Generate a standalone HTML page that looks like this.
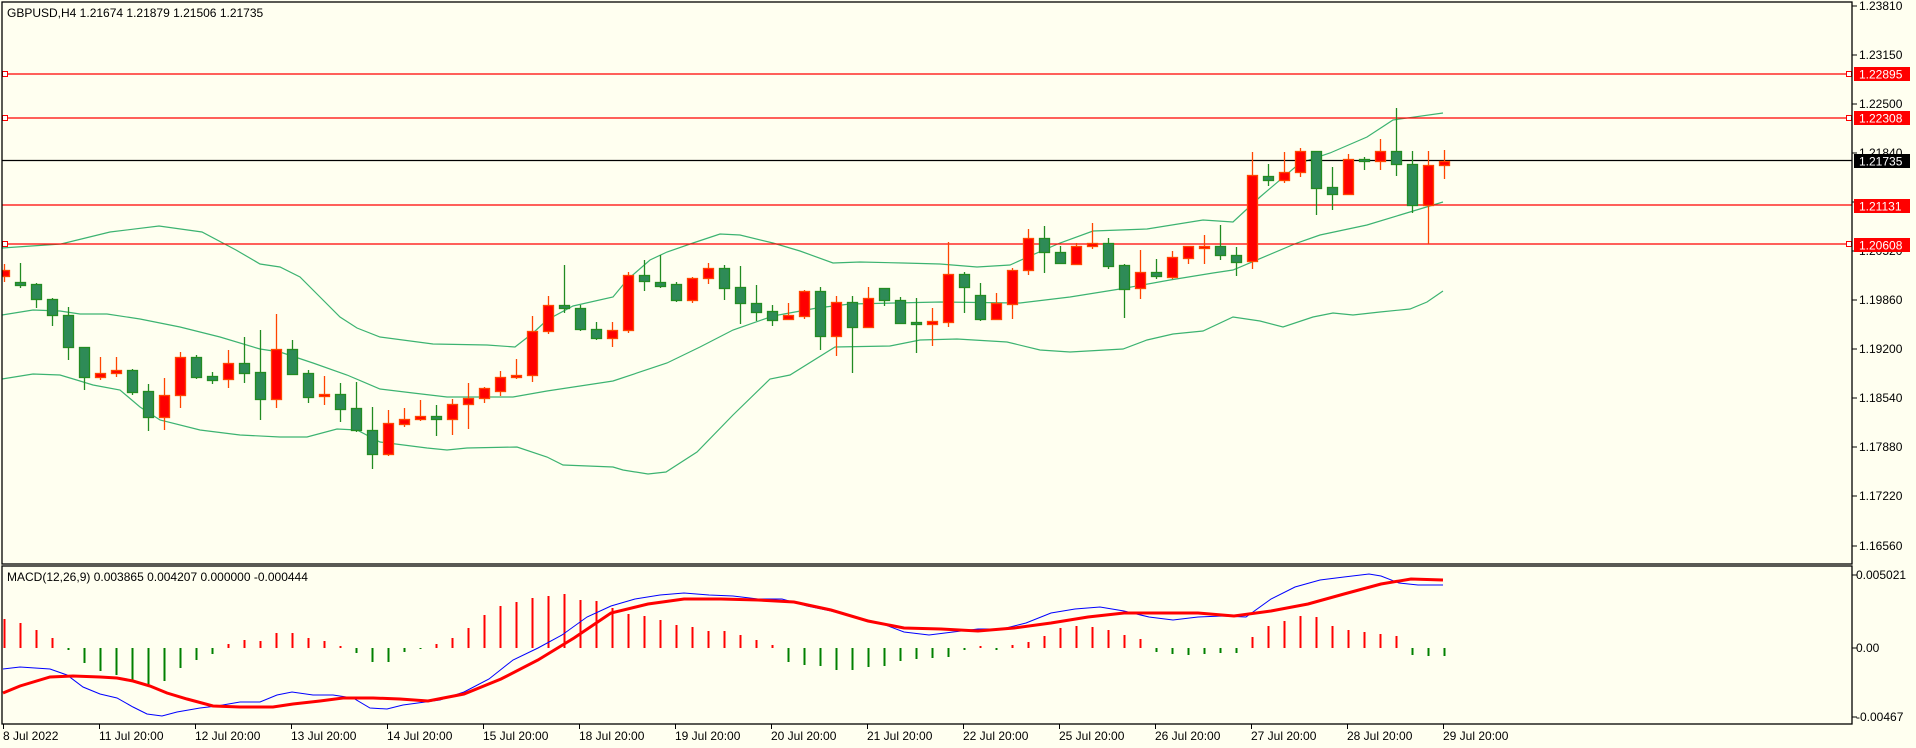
<!DOCTYPE html>
<html><head><meta charset="utf-8"><style>
html,body{margin:0;padding:0;background:#FFFFF0;width:1916px;height:748px;overflow:hidden}
svg{display:block}
text{font-family:"Liberation Sans",Tahoma,sans-serif;font-size:12px;fill:#000}
</style></head><body>
<svg id="s" width="1916" height="748" viewBox="0 0 1916 748" xmlns="http://www.w3.org/2000/svg">
<rect width="1916" height="748" fill="#FFFFF0"/>
<g id="bands" fill="none" stroke="#3CB371" stroke-width="1.2">
<polyline points="2,248 61,244 110,232 159,226 202,232 236,250 260,264 280,267 300,277 320,297 340,317 357,328 380,337 433,344 487,345 515,347 533,333 547,320 573,306 613,297 627,280 650,260 667,252 693,243 720,234 740,235 773,243 800,251 833,263 860,262 903,263 940,264 977,267 1010,265 1030,256 1060,243 1093,231 1147,229 1203,220 1233,222 1260,197 1300,163 1330,153 1367,137 1393,120 1443,113"/>
<polyline points="2,315 33,310 60,311 80,314 107,314 140,319 180,327 220,337 260,349 280,352 313,363 347,375 380,389 413,393 447,397 513,397 547,391 613,381 667,363 700,347 733,330 773,316 817,308 850,304 940,302 1020,303 1070,297 1120,289 1170,280 1213,273 1233,270 1297,243 1320,235 1367,225 1400,215 1443,202"/>
<polyline points="2,379 33,374 60,375 80,381 93,385 120,390 140,407 160,420 200,430 240,435 280,437 307,437 337,429 357,430 380,442 427,448 447,450 467,448 517,447 547,457 563,465 613,467 623,470 648,474 666,472 697,452 733,415 770,379 790,375 835,347 890,346 920,340 957,339 1007,342 1040,350 1070,352 1123,349 1147,340 1173,334 1203,331 1233,317 1260,321 1283,327 1313,317 1333,313 1353,315 1380,312 1410,309 1427,302 1443,291"/>
</g>
<g stroke="#FF0000" stroke-width="1.3">
<line x1="2" y1="74" x2="1852" y2="74"/>
<line x1="2" y1="118" x2="1852" y2="118"/>
<line x1="2" y1="205" x2="1852" y2="205"/>
<line x1="2" y1="244" x2="1852" y2="244"/>
</g>
<line x1="2" y1="160.5" x2="1852" y2="160.5" stroke="#000" stroke-width="1.3"/>
<g fill="#fff" stroke="#FF0000" stroke-width="1">
<rect x="2.5" y="71.5" width="5" height="5"/><rect x="1846.5" y="71.5" width="5" height="5"/>
<rect x="2.5" y="115.5" width="5" height="5"/><rect x="1846.5" y="115.5" width="5" height="5"/>
<rect x="2.5" y="241.5" width="5" height="5"/><rect x="1846.5" y="241.5" width="5" height="5"/>
</g>
<g id="candles"></g>
<g id="hist"></g>
<g fill="none">
<polyline stroke="#0000FF" stroke-width="1" points="3,669 20,667 50,669 67,675 83,687 100,694 117,698 133,707 147,714 162,716 177,712 200,708 217,706 240,702 260,702 277,695 292,692 313,695 333,695 353,698 370,708 387,709 403,705 440,700 464,692 489,679 513,660 538,648 562,635 587,617 611,606 635,599 660,595 684,593 709,595 733,596 758,599 782,599 807,606 831,611 855,617 880,623 904,632 929,635 953,632 978,629 1002,629 1026,623 1051,613 1075,609 1100,607 1124,611 1149,617 1173,620 1198,617 1222,616 1246,617 1271,599 1295,587 1320,580 1344,577 1369,574 1381,576 1399,583 1418,585 1443,585"/>
<polyline stroke="#FF0000" stroke-width="3" points="3,693 20,686 50,677 73,676 100,677 117,678 133,681 150,686 167,693 187,699 213,706 240,707 273,707 293,704 320,701 343,698 373,698 400,699 428,701 464,694 501,679 538,660 574,638 611,613 648,604 684,599 721,599 758,600 794,602 831,610 868,621 904,628 941,629 978,631 1014,628 1051,623 1088,617 1124,613 1161,613 1198,613 1234,616 1271,611 1308,604 1344,594 1381,584 1411,579 1443,580"/>
</g>
<rect x="0" y="0" width="2" height="748" fill="#FFFFF0"/>
<g fill="none" stroke="#000" stroke-width="1.3">
<rect x="2" y="2" width="1850" height="562"/>
<rect x="2" y="566" width="1850" height="158"/>
</g>
<g stroke="#000" stroke-width="1">
<line x1="1852" y1="6" x2="1857" y2="6"/><line x1="1852" y1="55" x2="1857" y2="55"/><line x1="1852" y1="104" x2="1857" y2="104"/><line x1="1852" y1="153" x2="1857" y2="153"/><line x1="1852" y1="202" x2="1857" y2="202"/><line x1="1852" y1="251" x2="1857" y2="251"/><line x1="1852" y1="300" x2="1857" y2="300"/><line x1="1852" y1="349" x2="1857" y2="349"/><line x1="1852" y1="398" x2="1857" y2="398"/><line x1="1852" y1="447" x2="1857" y2="447"/><line x1="1852" y1="496" x2="1857" y2="496"/><line x1="1852" y1="546" x2="1857" y2="546"/>
<line x1="1852" y1="575" x2="1857" y2="575"/><line x1="1852" y1="648" x2="1857" y2="648"/><line x1="1852" y1="717" x2="1857" y2="717"/>
</g>
<g id="ticks" stroke="#000"></g>
<text x="7" y="17">GBPUSD,H4  1.21674 1.21879 1.21506 1.21735</text>
<text x="7" y="581">MACD(12,26,9) 0.003865 0.004207 0.000000 -0.000444</text>
<g>
<text x="1859" y="10">1.23810</text><text x="1859" y="59">1.23150</text><text x="1859" y="108">1.22500</text><text x="1859" y="157">1.21840</text>
<text x="1859" y="255">1.20520</text><text x="1859" y="304">1.19860</text><text x="1859" y="353">1.19200</text><text x="1859" y="402">1.18540</text><text x="1859" y="451">1.17880</text><text x="1859" y="500">1.17220</text><text x="1859" y="550">1.16560</text>
<text x="1856" y="579">0.005021</text><text x="1856" y="652">0.00</text><text x="1856" y="721">-0.00467</text>
</g>
<rect x="1854" y="67" width="56" height="14" fill="#FF0000"/><text x="1859" y="78.5" style="fill:#fff">1.22895</text>
<rect x="1854" y="111" width="56" height="14" fill="#FF0000"/><text x="1859" y="122.5" style="fill:#fff">1.22308</text>
<rect x="1854" y="154" width="56" height="14" fill="#000"/><text x="1859" y="165.5" style="fill:#fff">1.21735</text>
<rect x="1854" y="199" width="56" height="14" fill="#FF0000"/><text x="1859" y="210.5" style="fill:#fff">1.21131</text>
<rect x="1854" y="238" width="56" height="14" fill="#FF0000"/><text x="1859" y="249.5" style="fill:#fff">1.20608</text>
<g id="tl"></g>
</svg>
<script>
var NS="http://www.w3.org/2000/svg";
function el(p,t,a){var e=document.createElementNS(NS,t);for(var k in a)e.setAttribute(k,a[k]);p.appendChild(e);return e;}
var C=[
['r',270,276,264,282],['g',282,285,263,288],['g',284,299,283,308],['g',299,315,298,326],['g',315,347,307,360],
['g',347,377,347,390],['r',373,377,357,380],['r',370,373,357,377],['g',370,392,369,395],['g',391,417,384,431],
['r',395,417,378,430],['r',357,395,352,408],['g',357,377,355,379],['g',376,380,372,384],['r',363,379,350,388],
['g',363,373,337,383],['g',372,399,330,420],['r',349,399,314,408],['g',349,374,340,375],['g',373,397,370,403],
['r',394,396,376,405],['g',394,409,383,422],['g',408,430,382,432],['g',430,454,407,469],['r',423,454,410,456],
['r',419,424,408,427],['r',416,419,400,421],['g',416,419,405,436],['r',404,419,399,435],['r',398,404,383,429],
['r',388,398,387,403],['r',377,391,371,396],['r',375,377,359,379],['r',331,375,316,382],['r',305,331,296,334],
['g',305,308,265,313],['g',308,329,305,331],['g',329,338,322,340],['r',330,338,322,347],['r',275,330,272,333],
['g',275,281,260,291],['g',282,286,255,288],['g',284,300,282,302],['r',278,300,277,303],['r',268,278,263,284],
['g',268,288,265,300],['g',287,303,266,324],['g',303,312,285,321],['g',311,320,305,326],['r',315,319,303,319],
['r',291,316,290,319],['g',291,336,287,350],['r',302,336,296,356],['g',302,327,296,373],['r',298,327,287,327],
['g',288,300,288,306],['g',300,323,297,324],['g',322,324,298,353],['r',321,324,308,346],['r',274,322,242,327],
['g',274,287,272,313],['g',295,319,283,321],['r',303,319,293,320],['r',270,304,268,319],['r',238,270,229,275],
['g',238,252,226,273],['g',252,263,246,263],['r',246,264,243,265],['r',243,246,223,249],['g',243,266,238,269],
['g',265,289,264,318],['r',272,288,250,299],['g',272,276,259,279],['r',257,277,251,279],['r',246,258,246,264],
['r',246,247,235,264],['g',246,255,225,260],['g',255,262,247,276],['r',175,261,152,269],['g',176,180,164,186],
['r',172,180,152,183],['r',151,172,148,177],['g',151,188,151,215],['g',187,194,167,210],['r',159,194,154,194],
['g',159,161,157,170],['r',151,161,139,170],['g',151,164,108,176],['g',164,205,151,213],['r',165,205,151,244],
['r',161,165,150,179]];
var cg=document.getElementById('candles');
C.forEach(function(c,i){var x=4+16*i;var col=c[0]=='g'?'#228B22':'#FF4500';var fill=c[0]=='g'?'#2E8B57':'#FF0000';
el(cg,'line',{x1:x+.5,x2:x+.5,y1:c[3],y2:c[4],stroke:col,'stroke-width':1.3});
var h=Math.max(c[2]-c[1],2);el(cg,'rect',{x:x-4.5,y:c[1]+.5,width:10,height:h,fill:fill,stroke:col,'stroke-width':1.3});});
var H=[619,623,630,638,650,663,671,675,680,686,681,668,660,654,644,640,641,633,633,638,641,646,653,662,662,652,649,644,638,628,615,606,602,598,596,594,600,601,608,614,616,620,625,627,631,631,635,640,645,662,665,666,670,670,667,666,661,659,658,657,650,646,648,645,642,636,628,626,627,630,635,639,652,654,655,654,653,653,637,626,621,616,617,626,630,632,634,636,655,656,656];
var hg=document.getElementById('hist');
H.forEach(function(v,i){var x=4.5+16*i;var col=v<648?'#FF0000':'#008000';el(hg,'line',{x1:x,x2:x,y1:648,y2:v==648?650:v,stroke:col,'stroke-width':2});});
var L=['8 Jul 2022','11 Jul 20:00','12 Jul 20:00','13 Jul 20:00','14 Jul 20:00','15 Jul 20:00','18 Jul 20:00','19 Jul 20:00','20 Jul 20:00','21 Jul 20:00','22 Jul 20:00','25 Jul 20:00','26 Jul 20:00','27 Jul 20:00','28 Jul 20:00','29 Jul 20:00'];
var tl=document.getElementById('tl'),tk=document.getElementById('ticks');
L.forEach(function(s,k){var x=3+96*k;el(tk,'line',{x1:x+.5,x2:x+.5,y1:724,y2:729,'stroke-width':1});var t=el(tl,'text',{x:x,y:740});t.textContent=s;});
</script>
</body></html>
